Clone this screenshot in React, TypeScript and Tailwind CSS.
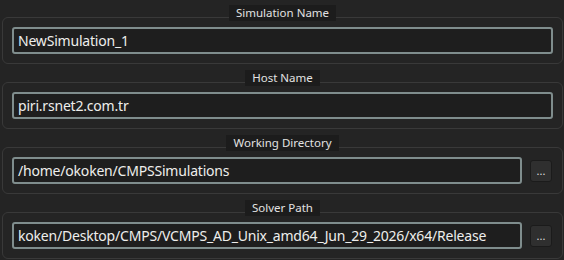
import React from 'react'

type Field = {
  label: string
  value: string
  browse?: boolean
}

const fields: Field[] = [
  { label: 'Simulation Name', value: 'NewSimulation_1' },
  { label: 'Host Name', value: 'piri.rsnet2.com.tr' },
  { label: 'Working Directory', value: '/home/okoken/CMPSSimulations', browse: true },
  { label: 'Solver Path', value: 'koken/Desktop/CMPS/VCMPS_AD_Unix_amd64_Jun_29_2026/x64/Release', browse: true },
]

function FieldGroup({ label, value, browse }: Field) {
  return (
    <div className="flex flex-col">
      <div className="flex justify-center -mb-[4px] relative z-10">
        <span className="h-[16px] px-[7px] bg-[#1c1c1c] text-[11.5px] leading-[16px] text-[#e2e2e2]">{label}</span>
      </div>
      <div className="border border-[#393939] rounded-[6px] p-[9px] flex items-center gap-[8px]">
        <div className="flex-1 min-w-0 h-[27px] border-2 border-[#7f8d8d] rounded-[3px] bg-[#1e1e1e] px-[4px] flex items-center overflow-hidden whitespace-nowrap text-[14px] tracking-[-0.2px] text-[#eeeeec]">
          {value}
        </div>
        {browse && (
          <button
            type="button"
            className="w-[22px] h-[22px] mr-[1px] shrink-0 rounded-[3px] bg-[#2f2f2f] border border-[#1b1b1b] text-[#dedede] text-[11px] leading-[18px] flex items-center justify-center"
          >
            ...
          </button>
        )}
      </div>
    </div>
  )
}

export default function App() {
  return (
    <div className="w-[564px] h-[260px] overflow-hidden bg-[#242424] pl-[2px] pr-[1px] pt-[5px] flex flex-col gap-[6px] font-['Noto_Sans',sans-serif]">
      {fields.map((f) => (
        <FieldGroup key={f.label} {...f} />
      ))}
    </div>
  )
}
